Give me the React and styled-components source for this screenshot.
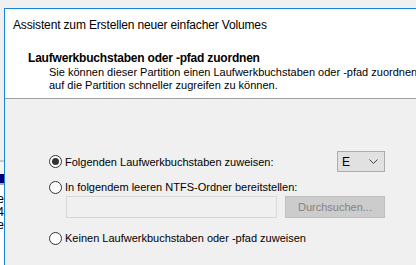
import styled, { createGlobalStyle } from "styled-components";

const GlobalStyle = createGlobalStyle`
  html, body {
    margin: 0;
    padding: 0;
    background: #f0f0f0;
    overflow: hidden;
  }
  body {
    font-family: "Segoe UI", "Liberation Sans", Arial, sans-serif;
    font-size: 11px;
    color: #000;
  }
`;

const StyledPage = styled.div`
  display: flex;
  width: 416px;
  height: 265px;
  overflow: hidden;
`;

const StyledBehind = styled.div`
  width: 4px;
  flex: none;
  display: flex;
  flex-direction: column;
  overflow: hidden;
`;

const StyledBehindTop = styled.div`
  height: 160px;
  background: #f0f0f0;
  border-bottom: 2px solid #c8c8c8;
`;

const StyledBehindGap = styled.div`
  height: 12px;
  background: #f4f4f4;
`;

const StyledBehindBar = styled.div`
  height: 9px;
  background: #00007c;
  border-bottom: 2px solid #a9a9a9;
`;

const StyledBehindList = styled.div`
  flex: 1;
  background: #fff;
  padding-top: 8px;
  display: flex;
  flex-direction: column;
  align-items: flex-end;
  font-size: 12px;
  line-height: 13px;
  white-space: nowrap;
`;

const StyledWindow = styled.div`
  flex: 1;
  margin-top: 8px;
  border-left: 1px solid #1883d7;
  border-top: 1px solid #1883d7;
  display: flex;
  flex-direction: column;
  min-width: 0;
`;

const StyledHeader = styled.div`
  background: #fff;
  height: 89px;
  border-bottom: 1px solid #a0a0a0;
  box-sizing: content-box;
  padding-left: 8px;
  white-space: nowrap;
`;

const StyledTitle = styled.div`
  padding-top: 8px;
  font-size: 12px;
  letter-spacing: -0.15px;
  line-height: 16px;
`;

const StyledHeading = styled.div`
  margin-top: 18px;
  padding-left: 15px;
  font-size: 12px;
  font-weight: bold;
  letter-spacing: -0.2px;
  line-height: 15px;
`;

const StyledDesc = styled.div`
  padding-left: 36px;
  line-height: 13px;
`;

const StyledBody = styled.div`
  flex: 1;
  background: #f0f0f0;
  padding: 52px 0 0 44px;
`;

const StyledContent = styled.div`
  width: 336px;
  display: flex;
  flex-direction: column;
`;

const StyledRow = styled.div`
  display: flex;
  align-items: center;
  justify-content: space-between;
  height: ${(p) => p.$h || 14}px;
  margin-top: ${(p) => p.$top || 0}px;
  padding-left: ${(p) => p.$indent || 0}px;
  white-space: nowrap;
`;

const StyledOption = styled.label`
  display: flex;
  align-items: center;
  gap: 3px;
`;

const StyledRadio = styled.span`
  width: 11px;
  height: 11px;
  border: 1px solid #333;
  border-radius: 50%;
  background: #fff;
  display: flex;
  align-items: center;
  justify-content: center;
  flex: none;

  &::after {
    content: "";
    width: 7px;
    height: 7px;
    border-radius: 50%;
    background: ${(p) => (p.$checked ? "#333" : "transparent")};
  }
`;

const StyledCombo = styled.div`
  width: 48px;
  height: 21px;
  border: 1px solid #adadad;
  background: #e1e1e1;
  display: flex;
  align-items: center;
  justify-content: space-between;
  padding: 0 6px 0 4px;
  box-sizing: border-box;
  font-size: 12px;
`;

const StyledField = styled.div`
  width: 211px;
  height: 22px;
  border: 1px solid #d9d9d9;
  background: #f0f0f0;
  box-sizing: border-box;
`;

const StyledButton = styled.div`
  width: 100px;
  height: 22px;
  border: 1px solid #bfbfbf;
  background: #cccccc;
  color: #838383;
  box-sizing: border-box;
  display: flex;
  align-items: center;
  justify-content: center;
`;

const Radio = ({ checked, children }) => (
  <StyledOption>
    <StyledRadio $checked={checked} />
    <span>{children}</span>
  </StyledOption>
);

const App = () => {
  return (
    <>
      <GlobalStyle />
      <StyledPage>
        <StyledBehind>
          <StyledBehindTop />
          <StyledBehindGap />
          <StyledBehindBar />
          <StyledBehindList>
            <span>ce</span>
            <span>4</span>
            <span>e</span>
          </StyledBehindList>
        </StyledBehind>
        <StyledWindow>
          <StyledHeader>
            <StyledTitle>Assistent zum Erstellen neuer einfacher Volumes</StyledTitle>
            <StyledHeading>Laufwerkbuchstaben oder -pfad zuordnen</StyledHeading>
            <StyledDesc>
              Sie können dieser Partition einen Laufwerkbuchstaben oder -pfad zuordnen, um
              <br />
              auf die Partition schneller zugreifen zu können.
            </StyledDesc>
          </StyledHeader>
          <StyledBody>
            <StyledContent>
              <StyledRow $h={21}>
                <Radio checked>Folgenden Laufwerkbuchstaben zuweisen:</Radio>
                <StyledCombo>
                  <span>E</span>
                  <svg width="9" height="5" viewBox="0 0 9 5">
                    <path d="M0.5 0.5 L4.5 4.5 L8.5 0.5" fill="none" stroke="#444" strokeWidth="1" />
                  </svg>
                </StyledCombo>
              </StyledRow>
              <StyledRow $top={8}>
                <Radio>In folgendem leeren NTFS-Ordner bereitstellen:</Radio>
              </StyledRow>
              <StyledRow $h={22} $top={2} $indent={17}>
                <StyledField />
                <StyledButton>Durchsuchen...</StyledButton>
              </StyledRow>
              <StyledRow $top={13}>
                <Radio>Keinen Laufwerkbuchstaben oder -pfad zuweisen</Radio>
              </StyledRow>
            </StyledContent>
          </StyledBody>
        </StyledWindow>
      </StyledPage>
    </>
  );
};

export default App;
